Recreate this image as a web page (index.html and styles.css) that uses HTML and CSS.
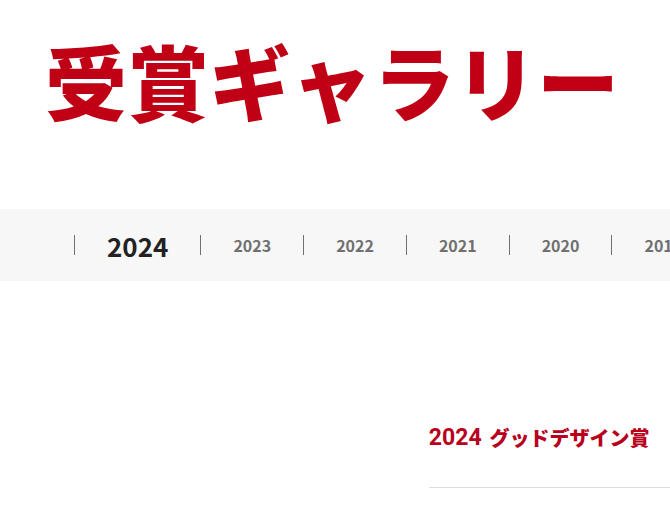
FILE: index.html
```html
<!DOCTYPE html>
<html lang="ja">
<head>
    <meta charset="UTF-8">
    <meta name="viewport" content="width=device-width, initial-scale=1.0">
    <title>受賞ギャラリー</title>
    <link rel="stylesheet" href="styles.css">
</head>
<body>
    <header class="page-header">
        <h1>受賞ギャラリー</h1>
    </header>

    <nav class="year-nav">
        <ul class="year-list">
            <li><a href="#2024" class="current">2024</a></li>
            <li><a href="#2023">2023</a></li>
            <li><a href="#2022">2022</a></li>
            <li><a href="#2021">2021</a></li>
            <li><a href="#2020">2020</a></li>
            <li><a href="#2019">2019</a></li>
        </ul>
    </nav>

    <main class="gallery">
        <section class="award" id="2024">
            <h2><span class="award-year">2024</span>グッドデザイン賞</h2>
        </section>
    </main>
</body>
</html>
```

FILE: styles.css
```css
* {
    box-sizing: border-box;
}

body {
    margin: 0;
    font-family: "Noto Sans CJK JP", sans-serif;
    background-color: #fff;
    color: #222;
}

.page-header {
    padding: 22px 45px 72px;
}

.page-header h1 {
    margin: 0;
    font-size: 82px;
    font-weight: 900;
    line-height: 115px;
    color: #c00014;
    white-space: nowrap;
}

.year-nav {
    background-color: #f7f7f7;
    overflow: hidden;
}

.year-list {
    display: flex;
    align-items: center;
    height: 72px;
    margin: 0;
    padding: 0 0 0 74px;
    list-style: none;
}

.year-list li {
    display: flex;
    align-items: center;
    flex-shrink: 0;
    height: 20px;
    padding: 0 32px;
    border-left: 1px solid #707070;
}

.year-list a {
    font-size: 16px;
    font-weight: bold;
    color: #707070;
    text-decoration: none;
}

.year-list .current {
    font-size: 26px;
    color: #222;
}

.gallery {
    padding: 130px 0 0 64%;
}

.award h2 {
    display: flex;
    align-items: center;
    gap: 8px;
    margin: 0;
    padding-bottom: 22px;
    border-bottom: 1px solid #ddd;
    font-size: 20px;
    font-weight: 900;
    line-height: 54px;
    color: #b8001c;
    white-space: nowrap;
}

.award-year {
    font-family: Roboto, sans-serif;
    font-size: 23px;
    font-weight: bold;
}
```
